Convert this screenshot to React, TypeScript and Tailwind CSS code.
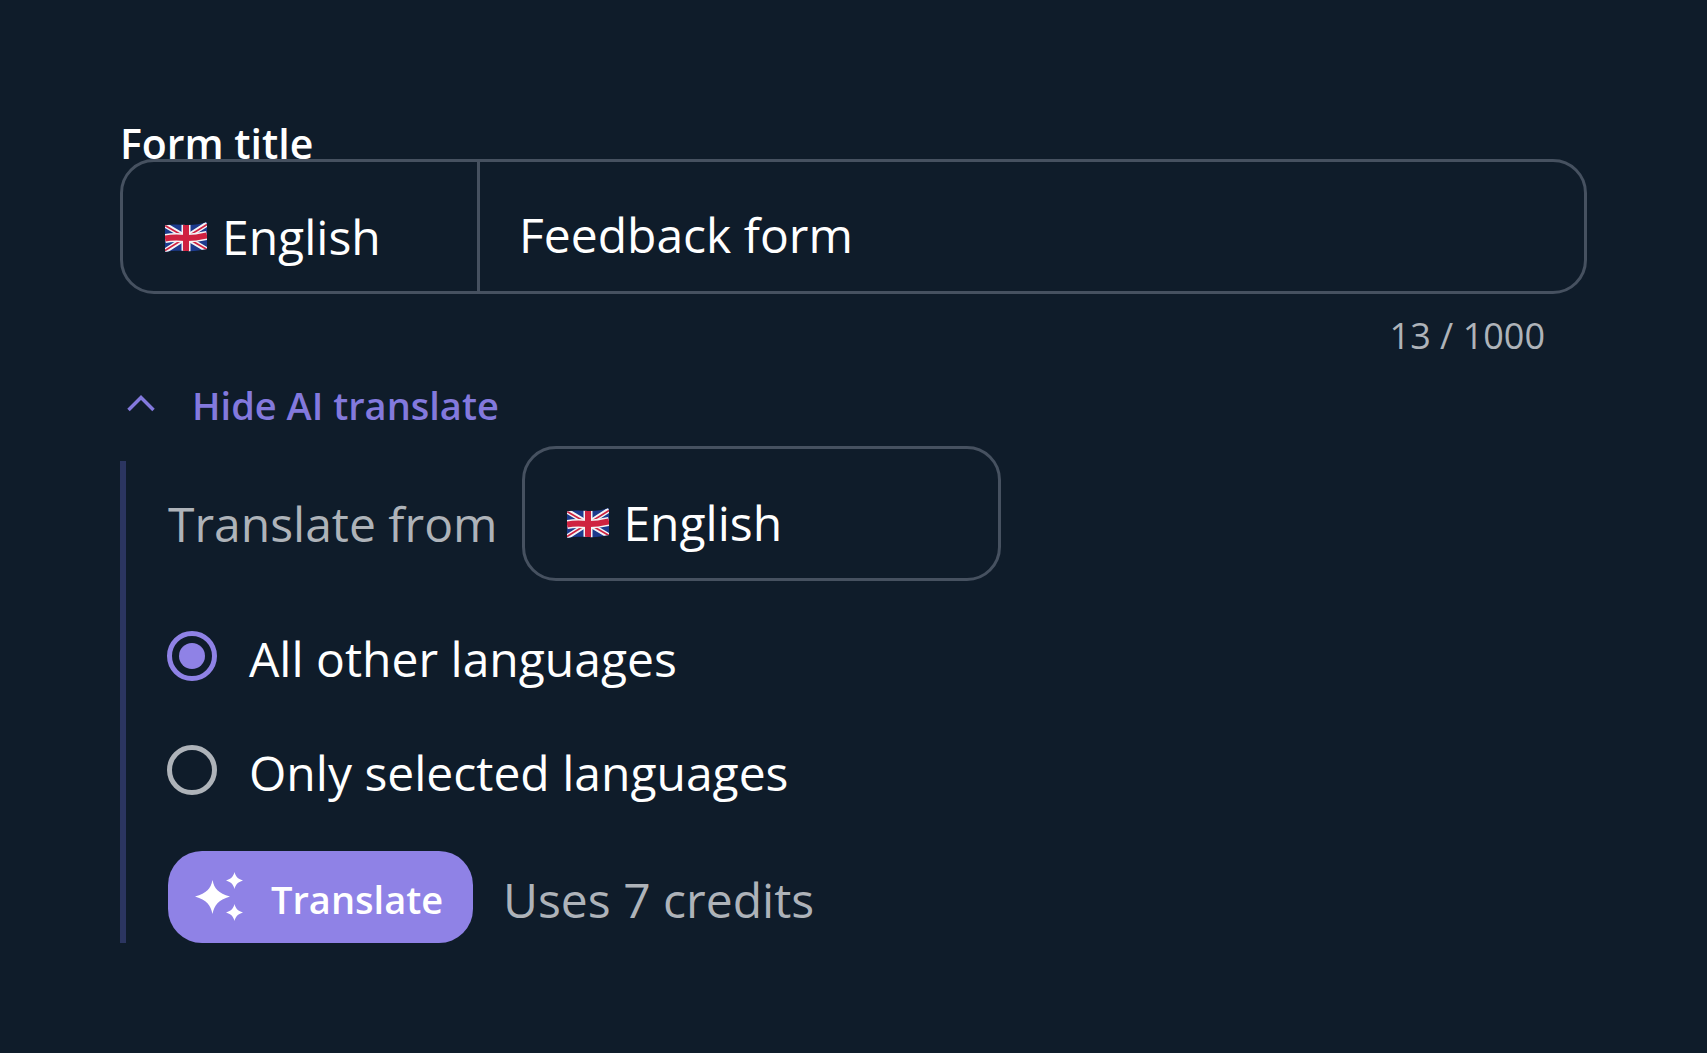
function UkFlag({ className }: { className?: string }) {
  return (
    <svg viewBox="0 0 42 30" className={className}>
      <defs>
        <clipPath id="flag-wave">
          <path d="M0 3.500C8 2 14 2.500 21 3C28 3.500 35 2 42 0L42 27C35 28.500 28 29.500 21 29C14 28.500 7 28.500 0 30Z" />
        </clipPath>
      </defs>
      <g clipPath="url(#flag-wave)">
        <rect width="42" height="30" fill="#1c3a8c" />
        <path d="M0 3L42 28M0 29L42 2" stroke="#f4f4f6" strokeWidth="5" />
        <path d="M0 3.500L42 27.500M0 28.500L42 2.500" stroke="#cf2240" strokeWidth="1.600" />
        <path d="M0 16.500C8 15 14 15.500 21 16C28 16.500 35 15 42 13.500" stroke="#f4f4f6" strokeWidth="9" fill="none" />
        <path d="M21 0V30" stroke="#f4f4f6" strokeWidth="9" />
        <path d="M0 16.500C8 15 14 15.500 21 16C28 16.500 35 15 42 13.500" stroke="#cf2240" strokeWidth="6" fill="none" />
        <path d="M21 0V30" stroke="#cf2240" strokeWidth="6" />
      </g>
    </svg>
  );
}

function SparkleIcon({ className }: { className?: string }) {
  return (
    <svg viewBox="0 0 48 50" className={className} fill="#ffffff">
      <path d="M17.500 8C19.500 17 23 21 35 24.500C23 28 19.500 33 17.500 42C15.500 33 12 28 0 24.500C12 21 15.500 17 17.500 8Z" />
      <path d="M39.500 0C40.500 4 42.500 7 48 8.500C42.500 10 40.500 13 39.500 17C38.500 13 36.500 10 31 8.500C36.500 7 38.500 4 39.500 0Z" />
      <path d="M39.500 32C40.500 36 42.500 39 48 40.500C42.500 42 40.500 45 39.500 49C38.500 45 36.500 42 31 40.500C36.500 39 38.500 36 39.500 32Z" />
    </svg>
  );
}

function Radio({ checked }: { checked?: boolean }) {
  if (checked) {
    return (
      <span className="-ml-px flex h-[50px] w-[50px] shrink-0 items-center justify-center rounded-full border-[5px] border-[#8f82e6]">
        <span className="h-[26px] w-[26px] rounded-full bg-[#8f82e6]" />
      </span>
    );
  }
  return <span className="-ml-px h-[50px] w-[50px] shrink-0 rounded-full border-[5px] border-[#aeb3b9]" />;
}

export default function App() {
  return (
    <div className="h-[1053px] w-full overflow-hidden bg-[#0f1c2a] pl-[120px] pr-[120px] pt-[121px] font-['Open_Sans',sans-serif] text-white">
      <label className="block h-[38px] text-[41px] font-semibold leading-[44px]">Form title</label>

      <div className="flex h-[135px] w-[1467px] rounded-[34px] border-[3px] border-[#465160]">
        <div className="flex w-[357px] items-center gap-[15px] border-r-[3px] border-[#465160] pl-[42px] pt-[20px]">
          <UkFlag className="h-[30px] w-[42px]" />
          <span className="text-[48px] leading-none">English</span>
        </div>
        <div className="flex items-center pl-[39px] pt-[16px] text-[48px] leading-none">Feedback form</div>
      </div>

      <div className="mt-[20px] w-[1425px] text-right text-[36px] leading-[44px] text-[#aeb3b9]">13 / 1000</div>

      <button className="mt-[21px] flex items-center gap-[37px] pl-[7px] text-[38px] font-semibold leading-[52px] text-[#8379dd]">
        <svg viewBox="0 0 28 18" className="mb-[4px] h-[18px] w-[28px]" fill="none" stroke="#8379dd" strokeWidth="3.500">
          <path d="M1.500 16L14 3.500L26.500 16" />
        </svg>
        Hide AI translate
      </button>

      <div className="mt-[30px] flex h-[482px] flex-col border-l-[6px] border-[#2b3560] pl-[42px]">
        <div className="-mt-[15px] flex items-center gap-[25px]">
          <span className="pt-[20px] text-[48px] leading-none text-[#aeb3b9]">Translate from</span>
          <div className="flex h-[135px] w-[479px] items-center gap-[14px] rounded-[34px] border-[3px] border-[#465160] pl-[42px] pt-[19px]">
            <UkFlag className="h-[30px] w-[42px]" />
            <span className="text-[48px] leading-none">English</span>
          </div>
        </div>

        <div className="mt-[48px] flex items-center gap-[32px]">
          <Radio checked />
          <span className="pt-[6px] text-[48px] leading-none">All other languages</span>
        </div>

        <div className="mt-[60px] flex items-center gap-[32px]">
          <Radio />
          <span className="pt-[6px] text-[48px] leading-none">Only selected languages</span>
        </div>

        <div className="mt-[54px] flex items-center gap-[30px]">
          <button className="flex h-[92px] w-[305px] items-center gap-[28px] rounded-[34px] bg-[#8f82e6] pl-[27px]">
            <SparkleIcon className="h-[50px] w-[48px]" />
            <span className="pt-[4px] text-[38px] font-semibold leading-none">Translate</span>
          </button>
          <span className="pt-[6px] text-[48px] leading-none text-[#aeb3b9]">Uses 7 credits</span>
        </div>
      </div>
    </div>
  );
}
